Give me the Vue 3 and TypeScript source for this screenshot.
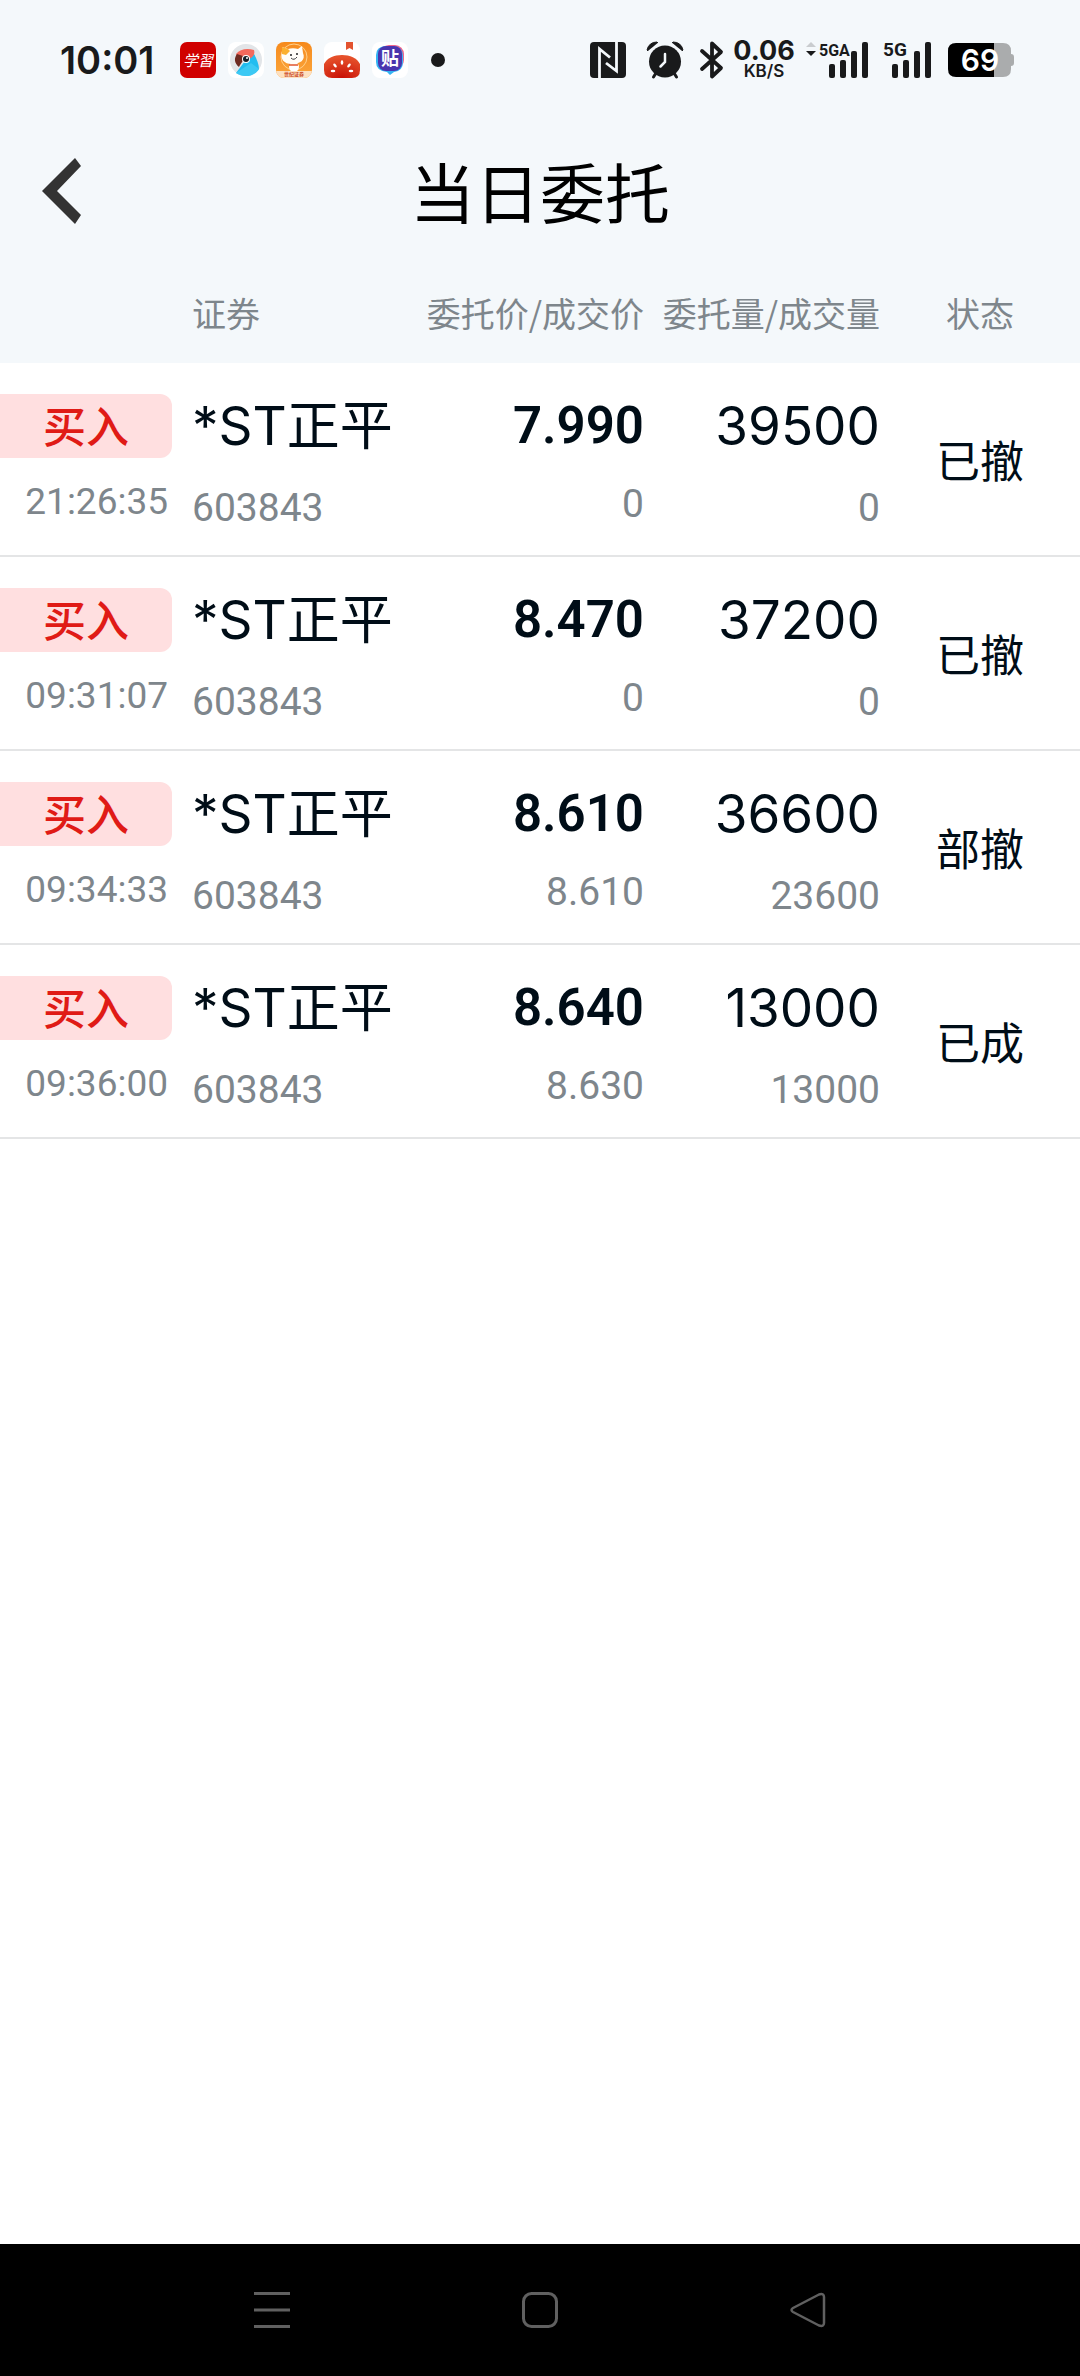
<script setup lang="ts">
interface Order {
  side: string
  time: string
  name: string
  code: string
  price: string
  dealPrice: string
  amount: string
  dealAmount: string
  status: string
}

const orders: Order[] = [
  { side: '买入', time: '21:26:35', name: '*ST正平', code: '603843', price: '7.990', dealPrice: '0', amount: '39500', dealAmount: '0', status: '已撤' },
  { side: '买入', time: '09:31:07', name: '*ST正平', code: '603843', price: '8.470', dealPrice: '0', amount: '37200', dealAmount: '0', status: '已撤' },
  { side: '买入', time: '09:34:33', name: '*ST正平', code: '603843', price: '8.610', dealPrice: '8.610', amount: '36600', dealAmount: '23600', status: '部撤' },
  { side: '买入', time: '09:36:00', name: '*ST正平', code: '603843', price: '8.640', dealPrice: '8.630', amount: '13000', dealAmount: '13000', status: '已成' },
]
</script>

<template>
  <div class="screen">
    <div class="status-bar">
      <span class="clock">10:01</span>
      <div class="apps">
        <svg class="app" viewBox="0 0 36 36" aria-hidden="true">
          <rect width="36" height="36" rx="7" fill="#d00000" />
          <text x="18" y="24" text-anchor="middle" font-size="15" font-style="italic" fill="#fff" class="cjk">学習</text>
        </svg>
        <svg class="app" viewBox="0 0 36 36" aria-hidden="true">
          <rect width="36" height="36" rx="8" fill="#fff" />
          <circle cx="18" cy="18" r="16" fill="#e2e5e8" />
          <path d="M26 12 C29 17 31 23 31 27 C26 35 15 36 8 31 L17 19 Z" fill="#22bdf0" />
          <path d="M23 21 L31 27 C26 35 15 36 8 31 Z" fill="#4fd0f7" opacity=".6" />
          <path d="M8 12 C12 7 19 6 26 8 C27 11 26 14 23 16 L15 20 L9 14 Z" fill="#f4695c" />
          <path d="M9 12 C6 16 6 21 11 25 C13 21 16 19 15 14 Z" fill="#6d2b22" />
          <circle cx="18" cy="17" r="4" fill="#fff" />
          <circle cx="18" cy="17" r="3" fill="#17202a" />
          <circle cx="19" cy="16" r="1" fill="#fff" />
        </svg>
        <svg class="app" viewBox="0 0 36 36" aria-hidden="true">
          <defs>
            <linearGradient id="orange" x1="0" y1="0" x2="0" y2="1">
              <stop offset="0" stop-color="#f68a1c" />
              <stop offset="1" stop-color="#fba63c" />
            </linearGradient>
            <clipPath id="round"><rect width="36" height="36" rx="8" /></clipPath>
          </defs>
          <g clip-path="url(#round)">
            <rect width="36" height="36" fill="url(#orange)" />
            <circle cx="18" cy="15" r="13" fill="none" stroke="#ffd08a" stroke-width="1" />
            <ellipse cx="18" cy="25" rx="5" ry="5" fill="#fff" />
            <path d="M6 5 L12 7 C15 6 19 6 22 7 L26 4 L27 11 C30 18 24 22 16 22 C8 22 4 17 6 11 Z" fill="#fffdf8" />
            <path d="M6 5 L12 7 L14 9 L10 13 L6 12 Z" fill="#fbb02f" />
            <circle cx="15" cy="13" r="1" fill="#222" />
            <circle cx="21" cy="12" r="1" fill="#222" />
            <path d="M15 16 Q18 19 21 15" fill="none" stroke="#444" stroke-width="1" />
            <path d="M13 23 H22" stroke="#e1542c" stroke-width="1.5" />
            <rect y="29" width="36" height="7" fill="#fde0c0" />
            <text x="18" y="34" text-anchor="middle" font-size="5" font-weight="700" fill="#c9481c" class="cjk">世纪证券</text>
          </g>
        </svg>
        <svg class="app" viewBox="0 0 36 36" aria-hidden="true">
          <defs>
            <radialGradient id="tomato" cx=".5" cy="1" r=".9">
              <stop offset="0" stop-color="#c80f05" />
              <stop offset="1" stop-color="#e5502a" />
            </radialGradient>
          </defs>
          <rect width="36" height="36" rx="8" fill="#fff" />
          <path d="M22 0 H29 V8 L25.500 6 L22 8 Z" fill="#e3532f" />
          <path d="M0 22 C3 16 10 13 18 13 C26 13 33 16 36 22 V28 Q36 36 28 36 H8 Q0 36 0 28 Z" fill="url(#tomato)" />
          <g fill="#fff">
            <ellipse cx="18" cy="20.500" rx="1.300" ry="2.300" />
            <ellipse cx="11" cy="23.500" rx="1.300" ry="2.300" transform="rotate(-40 11 23.500)" />
            <ellipse cx="25" cy="23.500" rx="1.300" ry="2.300" transform="rotate(40 25 23.500)" />
            <ellipse cx="9" cy="29" rx="2.300" ry="1.200" />
            <ellipse cx="27" cy="29" rx="2.300" ry="1.200" />
          </g>
        </svg>
        <svg class="app" viewBox="0 0 36 36" aria-hidden="true">
          <rect width="36" height="36" rx="8" fill="#fff" />
          <rect x="8" y="3" width="24" height="24" rx="9" fill="#f0648c" />
          <path d="M13 4 H22 Q31 5 31 14 V20 Q31 29 22 30 L18 33 L15 30 Q4 29 4 20 V13 Q4 5 13 4 Z" fill="#35b4f4" />
          <rect x="6" y="4" width="24" height="25" rx="8" fill="#4a35ad" />
          <text x="18" y="23" text-anchor="middle" font-size="18" font-weight="700" fill="#fff" class="cjk">贴</text>
        </svg>
      </div>
      <span class="dot"></span>

      <div class="indicators">
        <svg class="nfc" viewBox="0 0 36 36" aria-hidden="true">
          <rect width="36" height="36" rx="4" fill="#191a1b" />
          <path d="M9.500 36 V7 L20 15.500 M26.500 0 V29 L16 21" fill="none" stroke="#f4f8fb" stroke-width="2.800" />
        </svg>
        <svg class="alarm" viewBox="0 0 38 38" aria-hidden="true">
          <g fill="#191a1b">
            <circle cx="19" cy="20.500" r="16" />
            <path d="M1 9 Q3 1 11 1 L12 2 L2 10 Z M37 9 Q35 1 27 1 L26 2 L36 10 Z" stroke="#191a1b" stroke-width="1" stroke-linejoin="round" />
          </g>
          <path d="M0 12.500 L14 1 M38 12.500 L24 1" stroke="#f4f8fb" stroke-width="1.500" />
          <path d="M10 32 L7.500 36 M28 32 L30.500 36" stroke="#191a1b" stroke-width="3" stroke-linecap="round" />
          <path d="M19 13 V21 L14.500 25.500" fill="none" stroke="#f4f8fb" stroke-width="2.500" stroke-linecap="round" />
        </svg>
        <svg class="bluetooth" viewBox="0 0 24 38" aria-hidden="true">
          <path d="M2 10 L21 27 L12 35.500 V2.500 L21 11 L2 28" fill="none" stroke="#191a1b" stroke-width="3.800" stroke-linejoin="round" stroke-linecap="round" />
        </svg>
        <div class="speed">
          <span class="speed-value">0.06</span>
          <span class="speed-unit">KB/S</span>
        </div>
        <svg class="signal-a" viewBox="0 0 62 38" aria-hidden="true">
          <path d="M0 6 L5 1 L10 6 Z" fill="#c9cccf" />
          <path d="M0 10 H10 L5 15 Z" fill="#191a1b" />
          <text x="13" y="15" font-size="16" class="net">5GA</text>
          <g fill="#191a1b">
            <rect x="23" y="23" width="6" height="14" rx="2" />
            <rect x="34" y="19" width="6" height="18" rx="2" />
            <rect x="45" y="10" width="6" height="27" rx="2" />
            <rect x="56" y="1" width="6" height="36" rx="2" />
          </g>
        </svg>
        <svg class="signal-b" viewBox="0 0 48 38" aria-hidden="true">
          <text x="0" y="15" font-size="19" class="net">5G</text>
          <g fill="#191a1b">
            <rect x="9" y="23" width="6" height="14" rx="2" />
            <rect x="20" y="19" width="6" height="18" rx="2" />
            <rect x="31" y="10" width="6" height="27" rx="2" />
            <rect x="42" y="1" width="6" height="36" rx="2" />
          </g>
        </svg>
        <svg class="battery" viewBox="0 0 66 34" aria-hidden="true">
          <path d="M46 0 H55 Q63 0 63 8 V11 Q66 11 66 14 V20 Q66 23 63 23 V26 Q63 34 55 34 H46 Z" fill="#aaacad" />
          <path d="M8 0 H46 V34 H8 Q0 34 0 26 V8 Q0 0 8 0 Z" fill="#000" />
          <text x="32" y="28" text-anchor="middle" font-size="30" font-weight="600" fill="#fff" class="level">69</text>
        </svg>
      </div>
    </div>

    <header class="title-bar">
      <button class="back" type="button" aria-label="返回">
        <svg viewBox="0 0 40 66" aria-hidden="true">
          <path d="M33 0 L39 8 L15 33 L39 57 L33 66 L0 33 Z" fill="#333" />
        </svg>
      </button>
      <h1>当日委托</h1>
    </header>

    <main>
      <table>
        <colgroup>
          <col class="col-side" />
          <col />
          <col class="col-price" />
          <col class="col-amount" />
          <col class="col-status" />
        </colgroup>
        <thead>
          <tr>
            <th></th>
            <th scope="col" class="left">证券</th>
            <th scope="col" class="right">委托价/成交价</th>
            <th scope="col" class="right">委托量/成交量</th>
            <th scope="col">状态</th>
          </tr>
        </thead>
        <tbody>
          <tr v-for="order in orders" :key="order.time">
            <td>
              <div class="badge">{{ order.side }}</div>
              <div class="time">{{ order.time }}</div>
            </td>
            <td class="left">
              <div class="primary">{{ order.name }}</div>
              <div class="secondary">{{ order.code }}</div>
            </td>
            <td class="right">
              <div class="price">{{ order.price }}</div>
              <div class="secondary deal-price">{{ order.dealPrice }}</div>
            </td>
            <td class="right">
              <div class="primary">{{ order.amount }}</div>
              <div class="secondary">{{ order.dealAmount }}</div>
            </td>
            <td class="status">{{ order.status }}</td>
          </tr>
        </tbody>
      </table>
    </main>

    <nav class="system-nav" aria-label="系统导航">
      <button type="button" aria-label="最近任务">
        <svg viewBox="0 0 36 36" aria-hidden="true">
          <path d="M0 1.500 H36 M0 18 H36 M0 34.500 H36" stroke="#606060" stroke-width="3" />
        </svg>
      </button>
      <button type="button" aria-label="主屏幕">
        <svg viewBox="0 0 36 36" aria-hidden="true">
          <rect x="1.500" y="1.500" width="33" height="33" rx="8" fill="none" stroke="#606060" stroke-width="3" />
        </svg>
      </button>
      <button type="button" aria-label="返回上一页">
        <svg viewBox="0 0 36 36" aria-hidden="true">
          <path d="M29 2.500 L3 16 Q0 18 3 20 L29 33.500 Q34 35 34 31 V5 Q34 1 29 2.500 Z" fill="none" stroke="#606060" stroke-width="2.500" stroke-linejoin="round" />
        </svg>
      </button>
    </nav>
  </div>
</template>

<style>
body {
  margin: 0;
  background: #fff;
}
</style>

<style scoped>
.screen {
  display: flex;
  flex-direction: column;
  min-height: 100vh;
  color: #000d17;
  font-family: Inter, "Noto Sans CJK SC", sans-serif;
}

svg {
  display: block;
  flex: none;
  overflow: visible;
}

button {
  padding: 0;
  border: 0;
  background: none;
}

.status-bar {
  display: flex;
  align-items: center;
  box-sizing: border-box;
  height: 120px;
  padding: 0 66px 0 60px;
  background: #f4f8fb;
  color: #191a1b;
}

.clock {
  width: 120px;
  font-size: 38px;
  font-weight: 600;
  line-height: 40px;
}

.apps {
  display: flex;
  gap: 12px;
}

.app {
  width: 36px;
  height: 36px;
}

.cjk {
  font-family: "Noto Sans CJK SC", sans-serif;
}

.dot {
  width: 14px;
  height: 14px;
  margin-left: 23px;
  border-radius: 50%;
  background: #191a1b;
}

.indicators {
  display: flex;
  align-items: center;
  margin-left: auto;
}

.nfc {
  width: 36px;
  height: 36px;
}

.alarm {
  width: 38px;
  height: 38px;
  margin-left: 20px;
}

.bluetooth {
  width: 24px;
  height: 38px;
  margin-left: 16px;
}

.speed {
  display: flex;
  flex-direction: column;
  align-items: center;
  width: 60px;
  margin: 0 12px 0 10px;
}

.speed-value {
  font-size: 27px;
  font-weight: 700;
  line-height: 22px;
}

.speed-unit {
  font-size: 17px;
  font-weight: 600;
  line-height: 18px;
}

.net {
  fill: #191a1b;
  font-family: Roboto, sans-serif;
  font-weight: 700;
}

.signal-a {
  width: 62px;
  height: 38px;
}

.signal-b {
  width: 48px;
  height: 38px;
  margin-left: 15px;
}

.battery {
  width: 66px;
  height: 34px;
  margin-left: 17px;
}

.level {
  font-family: Inter, sans-serif;
}

.title-bar {
  display: grid;
  grid-template-columns: 120px 1fr 120px;
  align-items: center;
  height: 147px;
  background: #f4f8fb;
}

.back {
  display: flex;
  align-items: flex-start;
  height: 72px;
  padding-left: 42px;
}

.back svg {
  width: 40px;
  height: 66px;
}

h1 {
  margin: 0;
  padding-top: 2px;
  color: #000;
  font-size: 65px;
  font-weight: 400;
  line-height: 96px;
  text-align: center;
}

main {
  flex: 1;
}

table {
  width: 100%;
  border-collapse: collapse;
  table-layout: fixed;
}

.col-side {
  width: 192px;
}

.col-price {
  width: 234px;
}

.col-amount {
  width: 236px;
}

.col-status {
  width: 200px;
}

th {
  height: 90px;
  padding: 0 0 6px;
  background: #f4f8fb;
  color: #7e868c;
  font-family: "Noto Sans CJK SC", sans-serif;
  font-size: 34px;
  font-weight: 400;
  white-space: nowrap;
}

td {
  height: 161px;
  padding: 31px 0 0;
  border-bottom: 2px solid #e4e5e6;
  vertical-align: top;
  white-space: nowrap;
}

.left {
  text-align: left;
}

.right {
  text-align: right;
}

.badge {
  box-sizing: border-box;
  height: 64px;
  margin-right: 20px;
  border-radius: 0 12px 12px 0;
  background: #ffdfe0;
  color: #e01b16;
  font-size: 43px;
  font-weight: 500;
  line-height: 66px;
  text-align: center;
}

.time {
  margin-right: 24px;
  color: #7e868c;
  font-family: Roboto, sans-serif;
  font-size: 37px;
  line-height: 88px;
  text-align: right;
}

.primary {
  font-size: 53px;
  line-height: 64px;
}

.price {
  font-family: Roboto, sans-serif;
  font-size: 51px;
  font-weight: 600;
  line-height: 64px;
}

.secondary {
  margin-top: 4px;
  color: #7e868c;
  font-family: Roboto, sans-serif;
  font-size: 39px;
  line-height: 92px;
}

.deal-price {
  margin-top: 0;
}

.status {
  padding: 0;
  height: 192px;
  font-size: 44px;
  text-align: center;
  vertical-align: middle;
}

.system-nav {
  display: grid;
  grid-template-columns: repeat(3, 1fr);
  height: 132px;
  padding: 0 138px;
  background: #000;
}

.system-nav button {
  display: flex;
  align-items: center;
  justify-content: center;
}

.system-nav svg {
  width: 36px;
  height: 36px;
}
</style>
